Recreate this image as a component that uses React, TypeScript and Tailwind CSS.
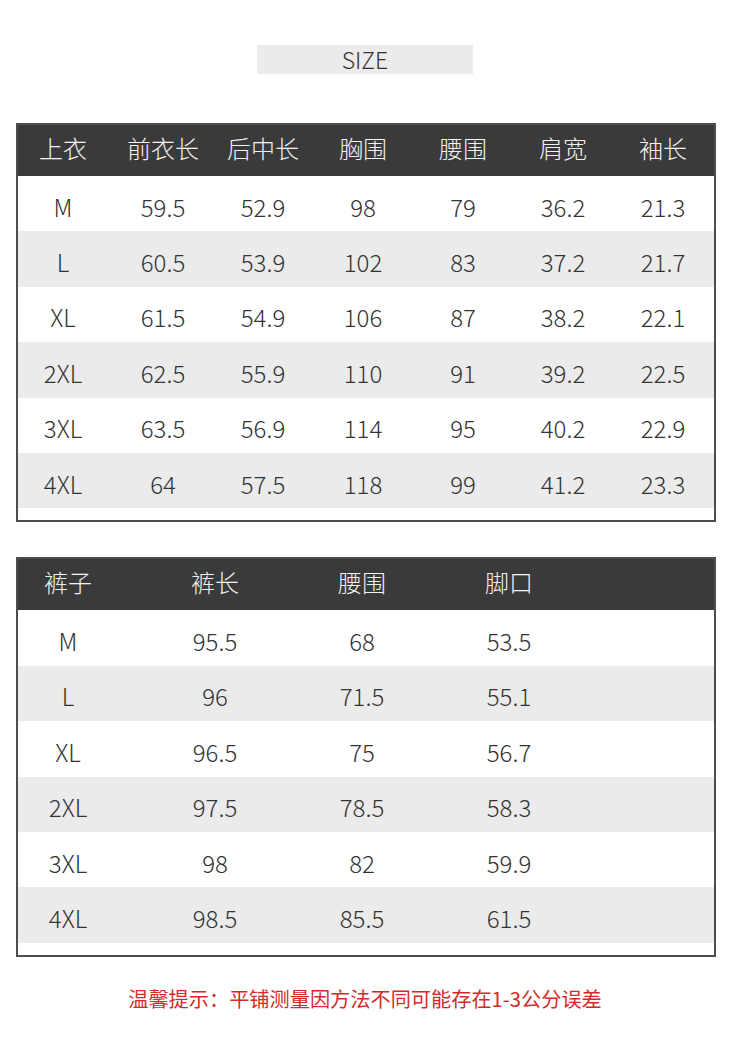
const TOP_HEAD = ["上衣", "前衣长", "后中长", "胸围", "腰围", "肩宽", "袖长"];
const TOP_ROWS = [
  ["M", "59.5", "52.9", "98", "79", "36.2", "21.3"],
  ["L", "60.5", "53.9", "102", "83", "37.2", "21.7"],
  ["XL", "61.5", "54.9", "106", "87", "38.2", "22.1"],
  ["2XL", "62.5", "55.9", "110", "91", "39.2", "22.5"],
  ["3XL", "63.5", "56.9", "114", "95", "40.2", "22.9"],
  ["4XL", "64", "57.5", "118", "99", "41.2", "23.3"],
];

const PANTS_HEAD = ["裤子", "裤长", "腰围", "脚口"];
const PANTS_ROWS = [
  ["M", "95.5", "68", "53.5"],
  ["L", "96", "71.5", "55.1"],
  ["XL", "96.5", "75", "56.7"],
  ["2XL", "97.5", "78.5", "58.3"],
  ["3XL", "98", "82", "59.9"],
  ["4XL", "98.5", "85.5", "61.5"],
];

const FONT = { fontFamily: '"Noto Sans CJK SC", "Noto Sans", sans-serif' };

function SizeTable({ head, rows, grid }: { head: string[]; rows: string[][]; grid: string }) {
  return (
    <div className="mx-[16px] w-[700px] border-2 border-[#4d4d4d] pb-[12px]">
      <div className={`grid h-[51px] items-center bg-[#3a3a3a] pb-[5px] text-[#f2f2f2] ${grid}`}>
        {head.map((h, i) => (
          <div key={i} className="text-center">{h}</div>
        ))}
      </div>
      {rows.map((r, ri) => (
        <div
          key={ri}
          className={`grid h-[55.4px] items-center pt-[6px] text-[#333] ${grid} ${ri % 2 === 1 ? "bg-[#ebebeb]" : "bg-white"}`}
        >
          {r.map((c, ci) => (
            <div key={ci} className="text-center">{c}</div>
          ))}
        </div>
      ))}
    </div>
  );
}

export default function App() {
  return (
    <div className="h-[1041px] w-[730px] bg-white text-[24px] font-light leading-none" style={FONT}>
      <div className="pt-[45px]">
        <div className="mx-auto flex h-[29px] w-[216px] items-center justify-center bg-[#ebebeb] text-[23px] text-[#333]">
          SIZE
        </div>
      </div>
      <div className="mt-[49px]">
        <SizeTable head={TOP_HEAD} rows={TOP_ROWS} grid="grid-cols-[repeat(7,90px)] gap-x-[10px]" />
      </div>
      <div className="mt-[35px]">
        <SizeTable head={PANTS_HEAD} rows={PANTS_ROWS} grid="grid-cols-[repeat(4,100px)] gap-x-[47px]" />
      </div>
      <div className="mt-[32px] text-center text-[20.2px] font-normal text-[#d42a2a]">
        温馨提示：平铺测量因方法不同可能存在1-3公分误差
      </div>
    </div>
  );
}
